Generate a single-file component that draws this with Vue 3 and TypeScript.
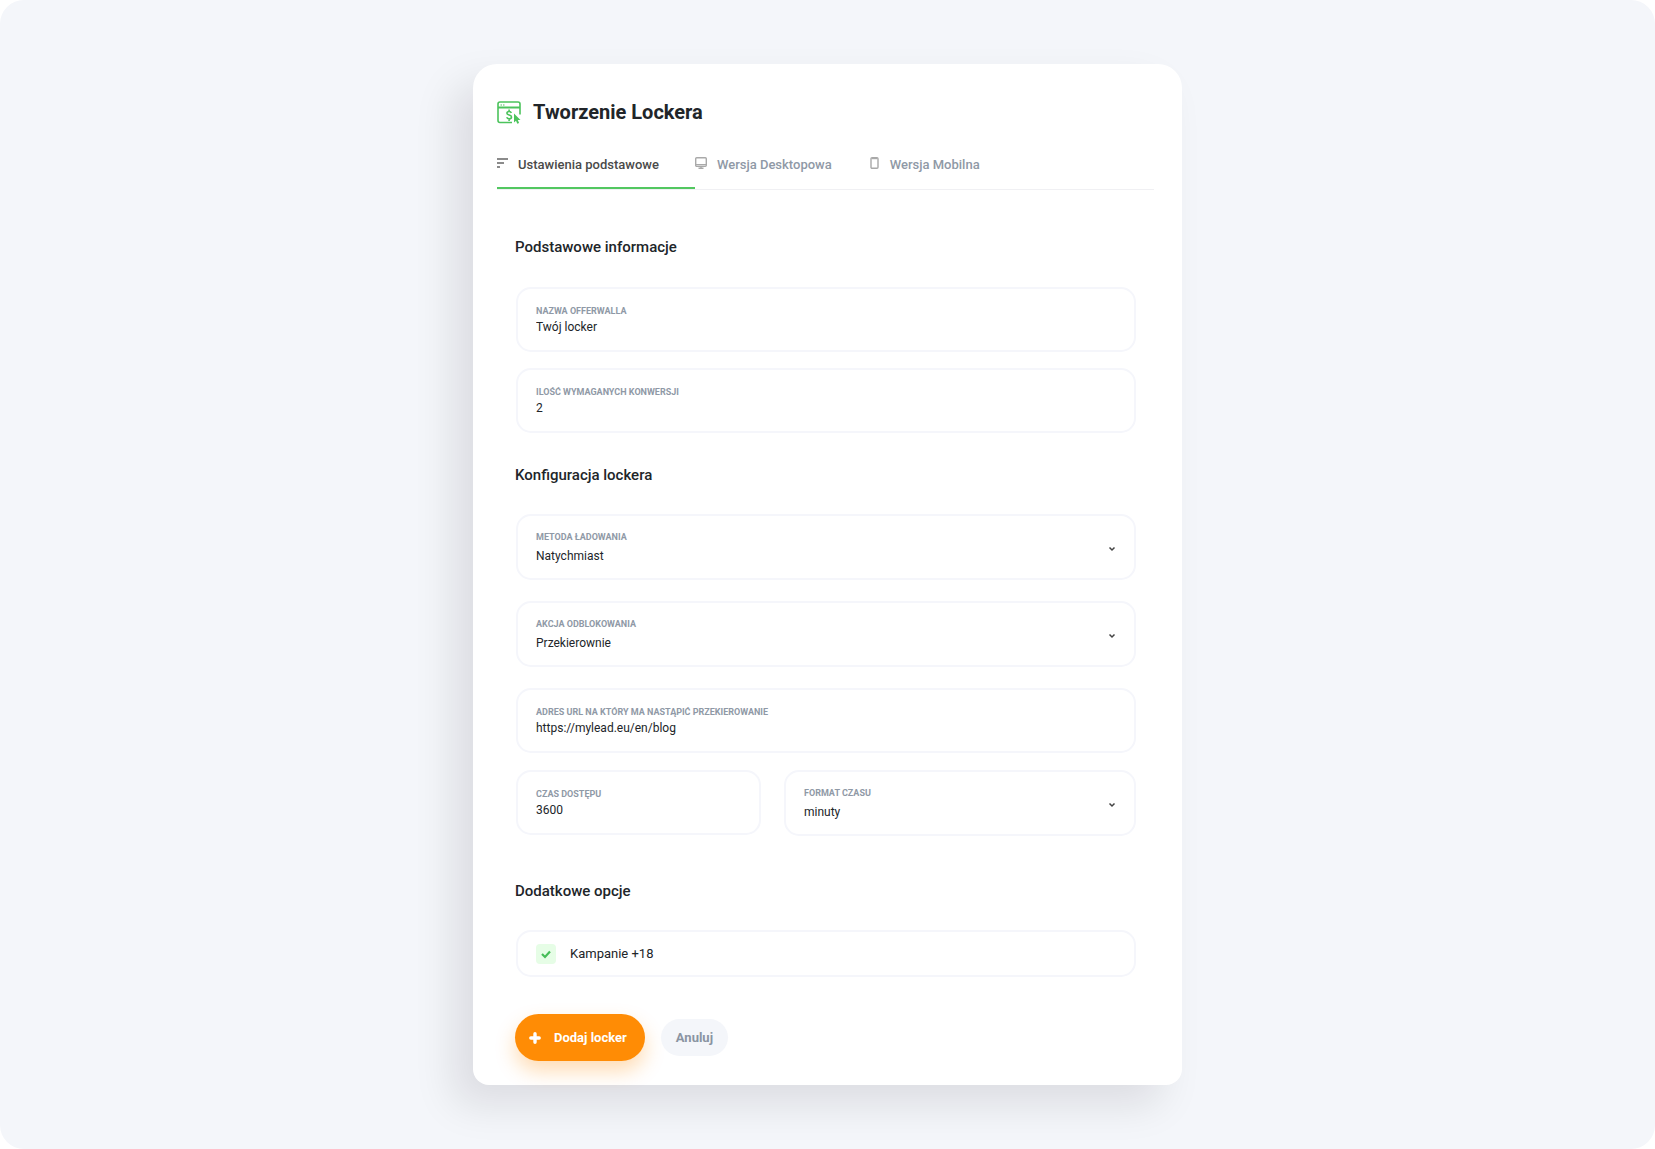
<script setup lang="ts">
import { ref } from 'vue'

type TabId = 'basic' | 'desktop' | 'mobile'

const tabs: { id: TabId; label: string }[] = [
  { id: 'basic', label: 'Ustawienia podstawowe' },
  { id: 'desktop', label: 'Wersja Desktopowa' },
  { id: 'mobile', label: 'Wersja Mobilna' },
]

const activeTab = ref<TabId>('basic')
const name = ref('Twój locker')
const conversions = ref('2')
const loadMethod = ref('Natychmiast')
const unlockAction = ref('Przekierownie')
const redirectUrl = ref('https://mylead.eu/en/blog')
const accessTime = ref('3600')
const timeFormat = ref('minuty')
const adult = ref(true)
</script>

<template>
  <div class="page">
    <main class="card">
      <header class="title">
        <svg class="title-icon" viewBox="0 0 24 24" fill="none" stroke="#4cc35c" stroke-width="1.600" aria-hidden="true">
          <path d="M15 22.500H3a2 2 0 0 1-2-2V4a2 2 0 0 1 2-2h18a2 2 0 0 1 2 2v10.500" />
          <path d="M1 7.500h22" stroke-width="2" />
          <path d="M3.500 5h1.500M6 5h1.500" stroke-width="1" />
          <path d="M14.300 12.900c-.3-.9-1.100-1.400-2.200-1.400-1.300 0-2.200.7-2.200 1.700 0 2.500 4.600 1.300 4.600 3.900 0 1.100-1 1.800-2.300 1.800-1.200 0-2.100-.5-2.500-1.600M12.100 9.500v2M12.100 18.900v2" stroke-width="1.600" />
          <path d="M17 13.500v9l2-1.700 1.300 3 1.800-.8-1.300-3H23.500z" fill="#4cc35c" stroke="none" />
        </svg>
        <h1>Tworzenie Lockera</h1>
      </header>

      <nav class="tabs" aria-label="Sekcje">
        <button
          v-for="tab in tabs"
          :key="tab.id"
          type="button"
          class="tab"
          :class="{ active: tab.id === activeTab }"
          @click="activeTab = tab.id"
        >
          <svg v-if="tab.id === 'basic'" class="tab-icon" width="11" height="12" viewBox="0 0 11 12" fill="none" stroke="#666" stroke-width="1.600" aria-hidden="true">
            <path d="M0 2h11M0 6h7M0 10h3" />
          </svg>
          <svg v-else-if="tab.id === 'desktop'" class="tab-icon" width="12" height="12" viewBox="0 0 12 12" fill="none" stroke="#a9a9a9" aria-hidden="true">
            <rect x=".7" y=".7" width="10.600" height="8.600" rx="1" stroke-width="1.400" />
            <path d="M1 7.500h10" />
            <path d="M3.500 11.300h5M6 9v2" stroke-width="1.400" />
          </svg>
          <svg v-else class="tab-icon" width="12" height="12" viewBox="0 0 12 12" fill="none" stroke="#a9a9a9" aria-hidden="true">
            <rect x="3" y=".7" width="7" height="10.600" rx="1" stroke-width="1.400" />
            <path d="M4 1.500h5" stroke-width="1.400" />
          </svg>
          {{ tab.label }}
        </button>
      </nav>

      <form class="form" @submit.prevent>
        <h2>Podstawowe informacje</h2>
        <div class="stack">
          <div class="field">
            <label for="name">NAZWA OFFERWALLA</label>
            <input id="name" v-model="name" type="text" />
          </div>
          <div class="field">
            <label for="conversions">ILOŚĆ WYMAGANYCH KONWERSJI</label>
            <input id="conversions" v-model="conversions" type="text" inputmode="numeric" />
          </div>
        </div>

        <h2>Konfiguracja lockera</h2>
        <div class="stack">
          <div class="field choice">
            <label for="method">METODA ŁADOWANIA</label>
            <select id="method" v-model="loadMethod">
              <option>Natychmiast</option>
            </select>
            <svg class="chevron" viewBox="0 0 8 6" aria-hidden="true"><path d="M1.500 1.500 4 4l2.500-2.500" /></svg>
          </div>
          <div class="field choice">
            <label for="action">AKCJA ODBLOKOWANIA</label>
            <select id="action" v-model="unlockAction">
              <option>Przekierownie</option>
            </select>
            <svg class="chevron" viewBox="0 0 8 6" aria-hidden="true"><path d="M1.500 1.500 4 4l2.500-2.500" /></svg>
          </div>
          <div class="field">
            <label for="url">ADRES URL NA KTÓRY MA NASTĄPIĆ PRZEKIEROWANIE</label>
            <input id="url" v-model="redirectUrl" type="text" />
          </div>
          <div class="row">
            <div class="field narrow">
              <label for="time">CZAS DOSTĘPU</label>
              <input id="time" v-model="accessTime" type="text" inputmode="numeric" />
            </div>
            <div class="field choice wide">
              <label for="format">FORMAT CZASU</label>
              <select id="format" v-model="timeFormat">
                <option>minuty</option>
              </select>
              <svg class="chevron" viewBox="0 0 8 6" aria-hidden="true"><path d="M1.500 1.500 4 4l2.500-2.500" /></svg>
            </div>
          </div>
        </div>

        <h2 class="extra">Dodatkowe opcje</h2>
        <label class="option">
          <input v-model="adult" type="checkbox" />
          <span>Kampanie +18</span>
        </label>

        <div class="actions">
          <button type="submit" class="primary">
            <svg width="12" height="12" viewBox="0 0 12 12" fill="none" stroke="#fff" stroke-width="3.400" stroke-linecap="round" aria-hidden="true">
              <path d="M6 1.800v8.400M1.800 6h8.400" />
            </svg>
            Dodaj locker
          </button>
          <button type="button" class="secondary">Anuluj</button>
        </div>
      </form>
    </main>
  </div>
</template>

<style>
body {
  margin: 0;
  background: #fff;
}
</style>

<style scoped>
.page {
  box-sizing: border-box;
  min-height: 100vh;
  padding: 64px 24px;
  border-radius: 24px;
  background: #f4f6fa;
  font-family: Roboto, "Liberation Sans", sans-serif;
  color: #212529;
}

.card {
  box-sizing: border-box;
  max-width: 709px;
  margin: 0 auto;
  padding: 32px 28px 24px 24px;
  border-radius: 24px 24px 16px 16px;
  background: #fff;
  box-shadow: -20px 20px 40px rgba(20, 10, 20, 0.1);
}

.title {
  display: flex;
  align-items: center;
  gap: 12px;
}

.title-icon {
  width: 24px;
  height: 24px;
}

h1 {
  margin: 0;
  font-size: 20px;
  line-height: 32px;
  font-weight: 700;
}

.tabs {
  display: flex;
  margin-top: 12px;
  border-bottom: 1px solid #f0f0f3;
}

.tab {
  display: flex;
  align-items: center;
  height: 49px;
  padding: 0 36px 0 0;
  border: 0;
  background: none;
  font: 500 13px/20px Roboto, "Liberation Sans", sans-serif;
  color: #8f99a6;
  cursor: pointer;
}

.tab.active {
  color: #4a4a4a;
  box-shadow: inset 0 -2px #52c760;
}

.tab-icon {
  margin: 0 10px 4px 0;
}

.form {
  padding: 0 18px;
}

h2 {
  margin: 32px 0 29px;
  font-size: 15px;
  line-height: 20px;
  font-weight: 500;
}

.form > h2:first-child {
  margin: 47px 0 30px;
}

h2.extra {
  margin-top: 45px;
}

.stack {
  display: flex;
  flex-direction: column;
  gap: 16px;
  margin-left: 1px;
}

.field {
  position: relative;
  display: flex;
  flex-direction: column;
  padding: 16px 18px 14px;
  border: 2px solid #f5f6fb;
  border-radius: 15px;
}

.field label {
  font-size: 9px;
  line-height: 12px;
  font-weight: 700;
  color: #8f99a6;
}

.field input,
.field select {
  width: 100%;
  height: 18px;
  margin: 1px 0 0;
  padding: 0;
  border: 0;
  outline: 0;
  appearance: none;
  background: none;
  font: 400 12px/18px Roboto, "Liberation Sans", sans-serif;
  color: #212529;
}

.choice {
  padding: 15px 18px 13px;
}

.stack > .choice {
  margin-bottom: 5px;
}

.field.choice select {
  margin-top: 4px;
}

.chevron {
  position: absolute;
  top: 30px;
  right: 18px;
  width: 8px;
  height: 6px;
  fill: none;
  stroke: #444;
  stroke-width: 1.5;
  pointer-events: none;
}

.row {
  display: flex;
  align-items: flex-start;
  gap: 23px;
  margin-top: 1px;
}

.narrow {
  flex: 205 1 0;
}

.wide {
  flex: 312 1 0;
}

.option {
  display: flex;
  align-items: center;
  gap: 14px;
  height: 43px;
  margin-left: 1px;
  padding: 0 18px;
  border: 2px solid #f5f6fb;
  border-radius: 15px;
  font-size: 13px;
  line-height: 20px;
}

.option input {
  width: 20px;
  height: 20px;
  margin: 0;
  appearance: none;
  border-radius: 4px;
  background: #e6fde6;
}

.option input:checked {
  background: #e6fde6 url("data:image/svg+xml,%3Csvg xmlns='http://www.w3.org/2000/svg' viewBox='0 0 20 20'%3E%3Cpath d='M6 10l3 3 5-5.500' fill='none' stroke='%2346bd58' stroke-width='2.200'/%3E%3C/svg%3E") center / 20px 20px;
}

.actions {
  display: flex;
  align-items: center;
  gap: 16px;
  margin-top: 37px;
}

.primary,
.secondary {
  display: flex;
  align-items: center;
  border: 0;
  border-radius: 24px;
  font: 700 13px/20px Roboto, "Liberation Sans", sans-serif;
  cursor: pointer;
}

.primary {
  gap: 13px;
  height: 47px;
  padding: 0 18px 0 14px;
  background: #ff8c05;
  color: #fff;
  box-shadow: 0 10px 20px rgba(255, 140, 5, 0.3);
}

.secondary {
  height: 37px;
  padding: 0 15px;
  background: #f4f6fa;
  color: #8a94a2;
}
</style>
